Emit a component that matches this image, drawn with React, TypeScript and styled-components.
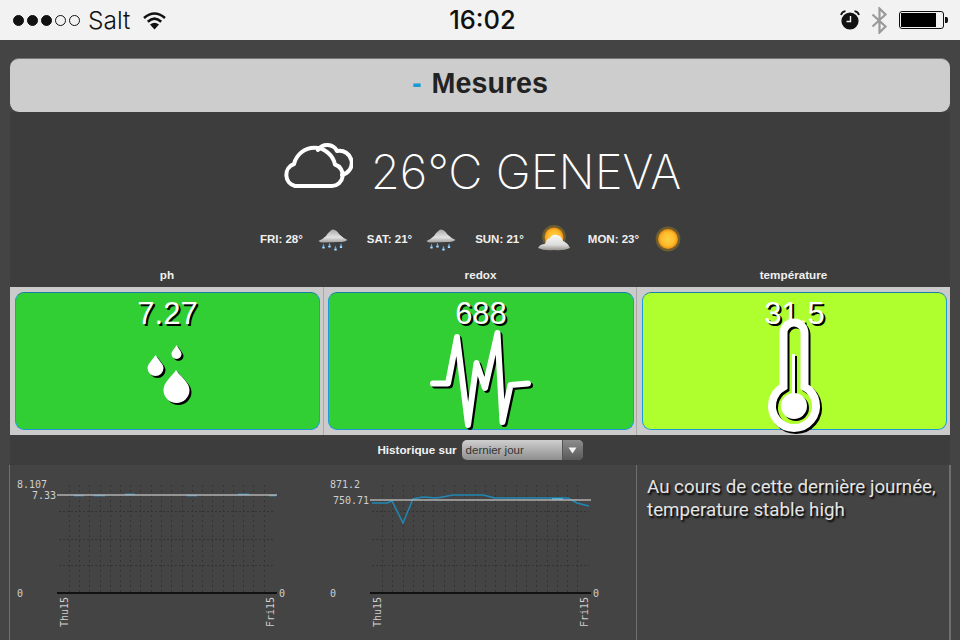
import React from "react";
import styled, { createGlobalStyle } from "styled-components";

const Global = createGlobalStyle`
  html, body { margin: 0; padding: 0; background: #444; }
  body { width: 960px; height: 640px; overflow: hidden; font-family: "Liberation Sans", Arial, sans-serif; }
  #root { width: 960px; height: 640px; }
`;

const Page = styled.div`
  width: 960px;
  height: 640px;
  display: flex;
  flex-direction: column;
  background: #444;
  overflow: hidden;
`;

const StatusBar = styled.div`
  height: 40px;
  flex: none;
  box-sizing: border-box;
  background: #f2f2f2;
  display: grid;
  grid-template-columns: 1fr auto 1fr;
  align-items: center;
  padding: 0 11px 0 13px;
  color: #111;
`;
const StatusLeft = styled.div`
  display: flex;
  align-items: center;
`;
const StatusRight = styled.div`
  display: flex;
  align-items: center;
  justify-content: flex-end;
`;
const Signal = styled.div`
  display: flex;
  gap: 3px;
  margin-right: 8px;
`;
const Dot = styled.span<{ $on: boolean }>`
  width: 11px;
  height: 11px;
  box-sizing: border-box;
  border-radius: 50%;
  border: 1px solid #111;
  background: ${(p) => (p.$on ? "#111" : "transparent")};
`;
const Carrier = styled.span`
  font: 300 24.500px/26px Inter, "Liberation Sans", sans-serif;
  margin-right: 12px;
`;
const Clock = styled.span`
  font: 500 25.500px/26px Inter, "Liberation Sans", sans-serif;
  padding-left: 3px;
`;
const StatusIcon = styled.svg<{ $gap?: number }>`
  display: block;
  margin-left: ${(p) => p.$gap ?? 0}px;
`;

const Content = styled.div`
  flex: 1;
  display: flex;
  flex-direction: column;
  padding: 18px 10px 0;
  min-height: 0;
`;
const TitleBar = styled.div`
  height: 54px;
  flex: none;
  box-sizing: border-box;
  background: #cdcdcd;
  border-top: 1px solid #777;
  border-radius: 9px;
  display: flex;
  align-items: center;
  justify-content: center;
  padding-bottom: 5px;
  font: 700 28.700px/32px "Liberation Sans", Arial, sans-serif;
  color: #222;
`;
const TitleDash = styled.span`
  color: #1b9ad6;
  margin-right: 10px;
`;

const WeatherPanel = styled.div`
  height: 153px;
  flex: none;
  background: #3d3d3d;
  display: flex;
  flex-direction: column;
  align-items: center;
`;
const CurrentWeather = styled.div`
  display: flex;
  align-items: flex-start;
  margin-top: 29px;
  padding-left: 2px;
  height: 48px;
`;
const BigIcon = styled.svg`
  display: block;
  margin-right: 18px;
`;
const BigTemp = styled.span`
  font: 200 47.200px/48px Inter, "Liberation Sans", sans-serif;
  color: #fff;
  white-space: nowrap;
  padding-top: 7px;
`;
const Forecast = styled.div`
  display: flex;
  align-items: center;
  margin-top: 34px;
  padding-right: 18px;
  height: 32px;
`;
const Day = styled.span`
  font: 700 11.500px/14px "Liberation Sans", Arial, sans-serif;
  color: #f0f0f0;
  white-space: nowrap;
`;
const DayIcon = styled.svg<{ $l: number; $r: number }>`
  display: block;
  margin: 0 ${(p) => p.$r}px 0 ${(p) => p.$l}px;
  filter: blur(0.35px);
`;

const Columns = styled.div`
  display: grid;
  grid-template-columns: 314px 313px 313px;
  flex: none;
`;
const LabelRow = styled(Columns)`
  height: 22px;
  background: #3d3d3d;
`;
const ColLabel = styled.div`
  font: 700 11.700px/20px "Liberation Sans", Arial, sans-serif;
  color: #f0f0f0;
  text-align: center;
`;
const TileRow = styled(Columns)`
  height: 148px;
  background: #cbcbcb;
`;
const TileCell = styled.div<{ $left: number; $right: number; $divider?: boolean }>`
  box-sizing: border-box;
  padding: 5px ${(p) => p.$right}px 5px ${(p) => p.$left}px;
  border-right: ${(p) => (p.$divider ? "1px solid #a9a9a9" : "none")};
`;
const Tile = styled.div<{ $color: string }>`
  height: 138px;
  box-sizing: border-box;
  background: ${(p) => p.$color};
  border: 1px solid #1c9bd8;
  border-top-color: #1a7fa8;
  border-radius: 9px;
  display: flex;
  flex-direction: column;
  align-items: center;
`;
const TileValue = styled.div`
  font: 400 31px/36px "Liberation Sans", Arial, sans-serif;
  color: #fff;
  text-shadow: 2px 2px 0 #000;
  margin-top: 3px;
  flex: none;
`;
const TileIcon = styled.svg<{ $top: number }>`
  display: block;
  flex: none;
  margin-top: ${(p) => p.$top}px;
  overflow: visible;
  filter: drop-shadow(2px 2px 0 #000);
  position: relative;
`;

const HistoryBar = styled.div`
  height: 30px;
  flex: none;
  background: #3d3d3d;
  display: flex;
  align-items: center;
  justify-content: center;
`;
const HistoryLabel = styled.span`
  font: 700 11.700px/14px "Liberation Sans", Arial, sans-serif;
  color: #f2f2f2;
  margin-right: 5px;
`;
const Picker = styled.div`
  width: 121px;
  height: 20px;
  border-radius: 5px;
  display: flex;
  overflow: hidden;
  background: linear-gradient(#cfcfcf, #8e8e8e);
  color: #333;
  font: 400 11.500px/20px "Liberation Sans", Arial, sans-serif;
`;
const PickerText = styled.span`
  flex: 1;
  padding-left: 4px;
`;
const PickerArrow = styled.span`
  width: 20px;
  border-left: 1px solid #555;
  background: linear-gradient(#8c8c8c, #595959);
  display: flex;
  align-items: center;
  justify-content: center;
`;

const BottomRow = styled.div`
  flex: 1;
  min-height: 0;
  display: grid;
  grid-template-columns: 314px 313px 313px;
  border-left: 1px solid #6f6f6f;
  margin-left: -1px;
  border-right: 1px solid #6f6f6f;
  margin-right: -1px;
`;
const ChartCell = styled.div<{ $divider?: boolean }>`
  border-right: ${(p) => (p.$divider ? "1px solid #6f6f6f" : "none")};
  min-width: 0;
`;
const ChartSvg = styled.svg`
  display: block;
`;
const ChartText = styled.text`
  font: 400 10px "DejaVu Sans Mono", monospace;
  fill: #cfcfcf;
`;
const Summary = styled.div`
  padding: 11px 10px 0;
  font: 400 18.750px/23px Roboto, "Liberation Sans", sans-serif;
  white-space: nowrap;
  color: #e4e4e4;
  text-shadow: 1.500px 2px 2px #000;
`;

const Gradients = styled.svg`
  position: absolute;
  width: 0;
  height: 0;
`;

const RainIcon = ({ l, r }: { l: number; r: number }) => (
  <DayIcon $l={l} $r={r} width="30" height="24" viewBox="0 0 30 24">
    <path d="M0.500 14 Q5 12 8 9 Q12 3 15 2.500 Q19 3 21 7 Q25 11 29.500 13 Q26 15.500 22 15 L5 15.500 Q2 15.500 .5 14Z" fill="url(#rainCloud)" />
    <path d="M5.500 16.500 l1.400 4 h-2.800z M11.500 15.500 l1.400 4 h-2.800z M17.500 18.500 l1.400 4 h-2.800z M23 16 l1.400 4 h-2.800z" fill="#5aa8ec" />
    <path d="M5.500 20 v1.500 M11.500 19 v1.500 M17.500 22 v1.500 M23 19.500 v1.500" stroke="#b6dcf8" strokeWidth="2.200" />
  </DayIcon>
);

const Sun = ({ cx, cy, r }: { cx: number; cy: number; r: number }) => (
  <>
    <circle cx={cx} cy={cy} r={r + 2.400} fill="#a8861f" opacity="0.45" />
    <circle cx={cx} cy={cy} r={r} fill="url(#sunFill)" />
  </>
);

const gridX1 = [69, 79, 89, 100, 110, 120, 130, 140, 151, 161, 171, 182, 192, 202, 212, 223, 233, 243, 253, 264];
const gridX2 = [382, 392, 403, 413, 423, 433, 444, 454, 464, 475, 485, 495, 505, 516, 526, 536, 547, 557, 567, 577];

const Chart = ({
  originX,
  left,
  right,
  guideY,
  top,
  guide,
  gridX,
  children,
}: {
  originX: number;
  left: number;
  right: number;
  guideY: number;
  top: string;
  guide: string;
  gridX: number[];
  children: React.ReactNode;
}) => (
  <ChartSvg width="313" height="175" viewBox={`${originX} 465 313 175`}>
    {[511, 539, 565].map((y) => (
      <line key={y} x1={left + 2} x2={right - 2} y1={y + 0.5} y2={y + 0.5} stroke="#333" strokeDasharray="2 2" />
    ))}
    {gridX.map((x) => (
      <line key={x} x1={x + 0.5} x2={x + 0.5} y1={485} y2={593} stroke="#333" strokeDasharray="2 3" />
    ))}
    {children}
    <line x1={left} x2={right} y1={guideY} y2={guideY} stroke="#b0b0b0" strokeWidth="1.600" />
    <line x1={left} x2={right} y1={593} y2={593} stroke="#000" strokeWidth="1.400" />
    <ChartText x={left - 40} y={488}>{top}</ChartText>
    <ChartText x={left - 1} y={guideY + 3.5} textAnchor="end">{guide}</ChartText>
    <ChartText x={left - 40} y={596.5}>0</ChartText>
    <ChartText x={right + 2} y={596.5}>0</ChartText>
    <ChartText transform={`translate(${left + 11} 627) rotate(-90)`}>Thu15</ChartText>
    <ChartText transform={`translate(${right - 3} 627) rotate(-90)`}>Fri15</ChartText>
  </ChartSvg>
);

export default function App() {
  return (
    <Page>
      <Global />
      <Gradients aria-hidden="true">
        <defs>
          <linearGradient id="rainCloud" x1="0" y1="0" x2="0" y2="1">
            <stop offset="0" stopColor="#a8a8a8" />
            <stop offset="0.6" stopColor="#e2e2e2" />
            <stop offset="1" stopColor="#a0a0a0" />
          </linearGradient>
          <radialGradient id="sunFill" cx="0.5" cy="0.5" r="0.5">
            <stop offset="0" stopColor="#ffd044" />
            <stop offset="0.7" stopColor="#fdbb2a" />
            <stop offset="1" stopColor="#ea8c10" />
          </radialGradient>
          <linearGradient id="whiteCloud" x1="0" y1="0" x2="0" y2="1">
            <stop offset="0" stopColor="#fafafa" />
            <stop offset="0.65" stopColor="#dcdcdc" />
            <stop offset="1" stopColor="#96918a" />
          </linearGradient>
        </defs>
      </Gradients>
      <StatusBar>
        <StatusLeft>
          <Signal>
            {[true, true, true, false, false].map((on, i) => (
              <Dot key={i} $on={on} />
            ))}
          </Signal>
          <Carrier>Salt</Carrier>
          <svg width="25" height="19" viewBox="0 0 25 19">
            <path d="M2 7 Q12.500 -2 23 7" fill="none" stroke="#111" strokeWidth="2.600" />
            <path d="M5.800 10.800 Q12.500 4.600 19.200 10.800" fill="none" stroke="#111" strokeWidth="2.600" />
            <path d="M12.500 18.500 L8 13.600 Q12.500 9.800 17 13.600Z" fill="#111" />
          </svg>
        </StatusLeft>
        <Clock>16:02</Clock>
        <StatusRight>
          <svg width="20" height="20" viewBox="0 0 20 20">
            <circle cx="10" cy="11" r="8.600" fill="#111" />
            <path d="M1 5 Q2 1.500 5.500 1.200 M19 5 Q18 1.500 14.500 1.200" fill="none" stroke="#111" strokeWidth="1.800" />
            <path d="M10.500 6 V11.500 H6.500" fill="none" stroke="#f2f2f2" strokeWidth="1.400" />
          </svg>
          <StatusIcon $gap={11} width="17" height="27" viewBox="0 0 17 27">
            <path d="M1.500 7.500 L14.500 19.500 L8.500 25.500 V1.500 L14.500 7.500 L1.500 19.500" fill="none" stroke="#9a9a9a" strokeWidth="2.200" />
          </StatusIcon>
          <StatusIcon $gap={11} width="50" height="20" viewBox="0 0 50 20">
            <rect x="0.500" y="1.500" width="44" height="17" rx="2.500" fill="none" stroke="#111" />
            <rect x="2" y="3" width="35" height="14" fill="#000" />
            <path d="M46 7 h1.500 q1.500 0 1.500 3 t-1.500 3 h-1.500z" fill="#111" />
          </StatusIcon>
        </StatusRight>
      </StatusBar>
      <Content>
        <TitleBar>
          <TitleDash>-</TitleDash>
          Mesures
        </TitleBar>
        <WeatherPanel>
          <CurrentWeather>
            <BigIcon width="72" height="48" viewBox="282 141 72 48">
              <g fill="none" stroke="#fff" strokeWidth="4" strokeLinecap="round" strokeLinejoin="round">
                <path d="M296 186 H333 A11 11 0 0 0 336 164.500 A21 21 0 0 0 295 164 A11.500 11.500 0 0 0 296 186 Z" />
                <path d="M319 150 A11 11 0 0 1 338 151 A11.500 11.500 0 0 1 343 175" />
              </g>
            </BigIcon>
            <BigTemp>26°C GENEVA</BigTemp>
          </CurrentWeather>
          <Forecast>
            <Day>FRI: 28°</Day>
            <RainIcon l={15} r={19} />
            <Day>SAT: 21°</Day>
            <RainIcon l={14} r={19} />
            <Day>SUN: 21°</Day>
            <DayIcon $l={13} $r={17} width="34" height="30" viewBox="0 0 34 30">
              <Sun cx={17} cy={13} r={9.5} />
              <path d="M1 24 Q3 20 8 20 Q9 15 13 14 Q15 10 20 11 Q25 12 26 17 Q31 19 33 24 Q27 27 17 26 Q7 27 1 24Z" fill="url(#whiteCloud)" />
            </DayIcon>
            <Day>MON: 23°</Day>
            <DayIcon $l={15} $r={0} width="28" height="28" viewBox="0 0 28 28">
              <Sun cx={14} cy={14} r={10} />
            </DayIcon>
          </Forecast>
        </WeatherPanel>
        <LabelRow>
          <ColLabel>ph</ColLabel>
          <ColLabel>redox</ColLabel>
          <ColLabel>température</ColLabel>
        </LabelRow>
        <TileRow>
          <TileCell $left={5} $right={3} $divider>
            <Tile $color="#32cf34">
              <TileValue>7.27</TileValue>
              <TileIcon $top={12} width="46" height="60" viewBox="144.500 344 46 60">
                <path d="M176 345 C178 349 181 351 181 354 A5 5 0 0 1 171 354 C171 351 174 349 176 345Z" fill="#fff" />
                <path d="M155 355 C158 360 163 364 163 368 A8 8 0 0 1 147 368 C147 364 152 360 155 355Z" fill="#fff" />
                <path d="M175.500 370 C179 376 189 382 189 390 A13 13 0 0 1 163 390 C163 382 172 376 175.500 370Z" fill="#fff" />
              </TileIcon>
            </Tile>
          </TileCell>
          <TileCell $left={4} $right={2} $divider>
            <Tile $color="#32cf34">
              <TileValue>688</TileValue>
              <TileIcon $top={-3} width="108" height="96" viewBox="427 329 108 96">
                <path
                  d="M433 383.500 H448 L457 337 L468 425 L476.500 363 L485 388 L497.500 333 L502.500 422 L510.500 385 L528 383.500"
                  fill="none"
                  stroke="#fff"
                  strokeWidth="6"
                  strokeLinecap="round"
                  strokeLinejoin="round"
                />
              </TileIcon>
            </Tile>
          </TileCell>
          <TileCell $left={5} $right={3}>
            <Tile $color="#afff2e">
              <TileValue>31.5</TileValue>
              <TileIcon $top={-14} width="56" height="116" viewBox="767.500 318 56 116">
                <path
                  d="M784 386.700 V333 A10.500 10.500 0 0 1 805 333 V386.700 A22 22 0 1 1 784 386.700 Z"
                  fill="none"
                  stroke="#fff"
                  strokeWidth="8"
                />
                <circle cx="794.500" cy="406" r="13" fill="#fff" />
                <line x1="794" x2="794" y1="354" y2="396" stroke="#fff" strokeWidth="3" />
              </TileIcon>
            </Tile>
          </TileCell>
        </TileRow>
        <HistoryBar>
          <HistoryLabel>Historique sur</HistoryLabel>
          <Picker>
            <PickerText>dernier jour</PickerText>
            <PickerArrow>
              <svg width="9" height="7" viewBox="0 0 9 7">
                <path d="M0.500 0.500 H8.500 L4.500 6.500Z" fill="#f4f4f4" />
              </svg>
            </PickerArrow>
          </Picker>
        </HistoryBar>
        <BottomRow>
          <ChartCell>
            <Chart originX={10} left={57} right={277} guideY={495} top="8.107" guide="7.33" gridX={gridX1}>
              <g stroke="#2aa6dc" strokeWidth="1.400">
                <line x1="74" x2="84" y1="495.600" y2="495.600" />
                <line x1="94" x2="105" y1="495.600" y2="495.600" />
                <line x1="125" x2="135" y1="494.400" y2="494.400" />
                <line x1="187" x2="197" y1="495.600" y2="495.600" />
                <line x1="238" x2="249" y1="494.400" y2="494.400" />
                <line x1="269" x2="276" y1="495.600" y2="495.600" />
              </g>
            </Chart>
          </ChartCell>
          <ChartCell $divider>
            <Chart originX={324} left={370} right={591} guideY={500} top="871.2" guide="750.71" gridX={gridX2}>
              <polyline
                points="372,503 387,503 392,501 403,523 413,499 423,497 437,498 453,495 483,495 495,498 550,498 563,498 568,498 577,503 589,506"
                fill="none"
                stroke="#1f88b5"
                strokeWidth="1.500"
              />
              <line x1="552" x2="563" y1="499" y2="499" stroke="#4fbfe8" strokeWidth="1.500" />
            </Chart>
          </ChartCell>
          <ChartCell $divider>
            <Summary>
              Au cours de cette dernière journée,
              <br />
              temperature stable high
            </Summary>
          </ChartCell>
        </BottomRow>
      </Content>
    </Page>
  );
}
